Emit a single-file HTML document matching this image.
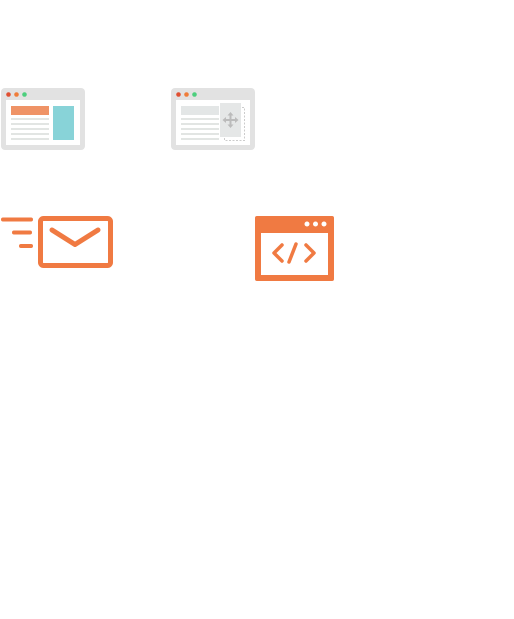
<!DOCTYPE html>
<html><head><style>body{margin:0;background:#fff;width:514px;height:619px;overflow:hidden}</style></head>
<body>
<svg width="514" height="619" style="position:absolute;left:0;top:0">
<!-- window 1 -->
<rect x="1" y="88" width="84" height="62" rx="4" fill="#e2e2e2"/>
<rect x="6" y="100" width="74" height="45" fill="#fff"/>
<circle cx="8.5" cy="94.5" r="2.3" fill="#e04f32"/><circle cx="16.5" cy="94.5" r="2.3" fill="#ef7d3a"/><circle cx="24.5" cy="94.5" r="2.3" fill="#4ccf7d"/>
<rect x="11" y="106" width="38" height="9" fill="#ef9366"/>
<rect x="53" y="106" width="21" height="34" fill="#88d3d8"/>
<g fill="#e2e5e3"><rect x="11" y="118" width="38" height="2"/><rect x="11" y="123" width="38" height="2"/><rect x="11" y="128" width="38" height="2"/><rect x="11" y="133" width="38" height="2"/><rect x="11" y="138" width="38" height="2"/></g>
<!-- window 2 -->
<rect x="171" y="88" width="84" height="62" rx="4" fill="#e2e2e2"/>
<rect x="176" y="100" width="74" height="45" fill="#fff"/>
<circle cx="178.5" cy="94.5" r="2.3" fill="#e04f32"/><circle cx="186.5" cy="94.5" r="2.3" fill="#ef7d3a"/><circle cx="194.5" cy="94.5" r="2.3" fill="#4ccf7d"/>
<rect x="181" y="106" width="38" height="9" fill="#e3e6e6"/>
<g fill="#e2e5e3"><rect x="181" y="118" width="38" height="2"/><rect x="181" y="123" width="38" height="2"/><rect x="181" y="128" width="38" height="2"/><rect x="181" y="133" width="38" height="2"/><rect x="181" y="138" width="38" height="2"/></g>
<rect x="224.5" y="107.5" width="20" height="33" fill="none" stroke="#ccc" stroke-dasharray="2,1.5"/>
<rect x="220" y="103" width="21" height="34" fill="#e5e7e7"/>
<g stroke="#bbb" stroke-width="2" fill="#bbb"><line x1="230.5" y1="114" x2="230.5" y2="126"/><line x1="224.5" y1="120" x2="236.5" y2="120"/></g>
<g fill="#bbb"><polygon points="230.5,112 227.5,115.5 233.5,115.5"/><polygon points="230.5,128 227.5,124.5 233.5,124.5"/><polygon points="222.5,120 226,117 226,123"/><polygon points="238.5,120 235,117 235,123"/></g>
<!-- envelope -->
<g stroke="#f07a42" stroke-linecap="round" fill="none">
<line x1="3" y1="219.5" x2="31" y2="219.5" stroke-width="4"/>
<line x1="14" y1="232.5" x2="30" y2="232.5" stroke-width="4"/>
<line x1="21" y1="246" x2="31" y2="246" stroke-width="4"/>
<rect x="40.5" y="218.5" width="70" height="47" rx="3" stroke-width="5"/>
<polyline points="52,230 75,244.5 98,230" stroke-width="5" stroke-linejoin="round"/>
</g>
<!-- code window -->
<rect x="255" y="216" width="79" height="65" rx="2" fill="#f07a42"/>
<rect x="261" y="233" width="67" height="42" fill="#fff"/>
<circle cx="307" cy="224" r="2.5" fill="#fff"/><circle cx="315.5" cy="224" r="2.5" fill="#fff"/><circle cx="324" cy="224" r="2.5" fill="#fff"/>
<g stroke="#f07a42" stroke-width="3.5" stroke-linecap="round" stroke-linejoin="round" fill="none">
<polyline points="282,245 274,253 282,261"/>
<line x1="296" y1="244" x2="289" y2="262"/>
<polyline points="306,245 314,253 306,261"/>
</g>
</svg>
</body></html>
